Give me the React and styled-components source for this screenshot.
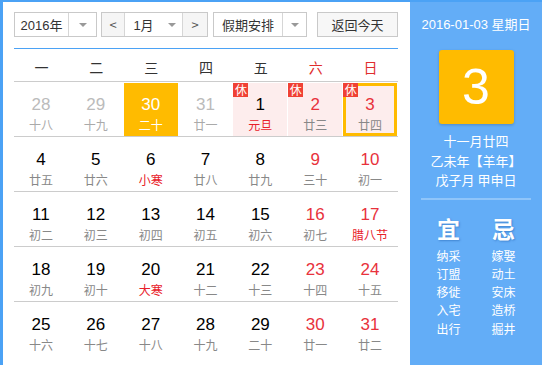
import React from 'react';
import styled, {createGlobalStyle} from 'styled-components';

const GlobalStyle = createGlobalStyle`
  html, body {
    margin: 0;
    padding: 0;
    background: #ffffff;
  }
  body {
    font-family: "Liberation Sans", "Noto Sans CJK SC", sans-serif;
  }
`;

const Widget = styled.div`
  display: flex;
  width: 542px;
  height: 365px;
  box-sizing: border-box;
  border-left: 3px solid #4ba2f5;
  border-top: 2px solid #4ba2f5;
  overflow: hidden;
  background: #ffffff;
`;

const Main = styled.div`
  width: 407px;
  box-sizing: border-box;
  padding: 10px 12px 0 11px;
  display: flex;
  flex-direction: column;
`;

const Toolbar = styled.div`
  display: flex;
  align-items: center;
  height: 25px;
`;

const Select = styled.div`
  display: flex;
  flex-shrink: 0;
  height: 25px;
  box-sizing: border-box;
  border: 1px solid #c9c9c9;
  background: #ffffff;
  margin-right: ${p => p.$gap || 0}px;
`;

const SelectText = styled.div`
  width: ${p => p.$w}px;
  display: flex;
  align-items: center;
  justify-content: center;
  font-size: 13px;
  color: #333333;
  font-family: "Liberation Sans", "Noto Sans CJK SC", sans-serif;
`;

const ArrowBox = styled.div`
  width: ${p => p.$w}px;
  display: flex;
  align-items: center;
  justify-content: center;
  border-left: ${p => (p.$divider ? '1px solid #d6d6d6' : 'none')};
`;

const Caret = styled.span`
  width: 0;
  height: 0;
  border-left: 4px solid transparent;
  border-right: 4px solid transparent;
  border-top: 4px solid #999999;
`;

const NavButton = styled.div`
  width: ${p => p.$w}px;
  display: flex;
  align-items: center;
  justify-content: center;
  background: #f5f5f5;
  color: #555555;
  font-size: 13px;
  font-family: "Noto Sans CJK SC", sans-serif;
  ${p => (p.$side === 'left' ? 'border-right: 1px solid #d6d6d6;' : 'border-left: 1px solid #d6d6d6;')}
`;

const TodayButton = styled.div`
  width: 81px;
  flex-shrink: 0;
  height: 25px;
  box-sizing: border-box;
  border: 1px solid #c9c9c9;
  background: #f7f7f7;
  display: flex;
  align-items: center;
  justify-content: center;
  font-size: 13px;
  color: #333333;
  font-family: "Noto Sans CJK SC", sans-serif;
`;

const WeekHeader = styled.div`
  margin-top: 11px;
  border-top: 1px solid #4ba2f5;
  border-bottom: 1px solid #cccccc;
  display: grid;
  grid-template-columns: repeat(7, 1fr);
  height: 34px;
  box-sizing: border-box;
`;

const WeekDay = styled.div`
  display: flex;
  align-items: center;
  justify-content: center;
  padding-top: 4px;
  font-size: 14px;
  color: ${p => (p.$weekend ? '#e02d2d' : '#333333')};
  font-family: "Noto Sans CJK SC", sans-serif;
`;

const Week = styled.div`
  display: grid;
  grid-template-columns: repeat(7, 1fr);
  height: 55px;
  box-sizing: border-box;
  border-bottom: ${p => (p.$last ? 'none' : '1px solid #cccccc')};
`;

const Cell = styled.div`
  position: relative;
  margin: 1px 1px 0 0;
  box-sizing: border-box;
  display: flex;
  flex-direction: column;
  align-items: center;
  padding-top: ${p => (p.$today ? 9 : 12)}px;
  background: ${p => (p.$hover ? '#ffbb00' : p.$rest ? '#fdeded' : 'transparent')};
  border: ${p => (p.$today ? '3px solid #ffbb00' : 'none')};
`;

const DayNum = styled.div`
  font-size: 17px;
  line-height: 20px;
  font-family: "Liberation Sans", Arial, sans-serif;
  color: ${p => p.$color};
`;

const Lunar = styled.div`
  margin-top: 2px;
  font-size: 12px;
  line-height: 16px;
  font-family: "Noto Sans CJK SC", sans-serif;
  color: ${p => p.$color};
`;

const RestBadge = styled.span`
  position: absolute;
  top: ${p => (p.$today ? -3 : 0)}px;
  left: ${p => (p.$today ? -3 : 0)}px;
  width: 15px;
  height: 14px;
  background: #f04134;
  color: #ffffff;
  font-size: 12px;
  line-height: 14px;
  text-align: center;
  font-family: "Noto Sans CJK SC", sans-serif;
`;

const Side = styled.div`
  flex: 1;
  background: #63adf7;
  display: flex;
  flex-direction: column;
  align-items: center;
  padding-top: 15px;
  color: #ffffff;
`;

const DateLine = styled.div`
  font-size: 13px;
  line-height: 16px;
  font-family: "Liberation Sans", "Noto Sans CJK SC", sans-serif;
`;

const BigDay = styled.div`
  margin-top: 17px;
  width: 75px;
  height: 74px;
  border-radius: 3px;
  background: #ffbb00;
  box-shadow: 0 1px 3px rgba(0, 0, 0, 0.2);
  display: flex;
  align-items: center;
  justify-content: center;
  font-size: 50px;
  font-family: "Liberation Sans", Arial, sans-serif;
`;

const LunarInfo = styled.div`
  margin-top: 7px;
  display: flex;
  flex-direction: column;
  align-items: center;
  font-size: 13px;
  line-height: 19.5px;
  font-family: "Noto Sans CJK SC", sans-serif;
`;

const Divider = styled.div`
  margin-top: 8px;
  width: 110px;
  height: 2px;
  background: #8fc5fa;
`;

const Almanac = styled.div`
  margin-top: 14px;
  display: grid;
  grid-template-columns: 40px 40px;
  column-gap: 15px;
  justify-items: center;
`;

const AlmanacCol = styled.div`
  display: flex;
  flex-direction: column;
  align-items: center;
`;

const AlmanacTitle = styled.div`
  font-size: 23px;
  line-height: 28px;
  font-weight: bold;
  text-shadow: 1px 1px 2px rgba(0, 60, 140, 0.35);
  margin-bottom: 5px;
  font-family: "Noto Sans CJK SC", sans-serif;
`;

const AlmanacItem = styled.div`
  font-size: 12px;
  line-height: 18.3px;
  font-family: "Noto Sans CJK SC", sans-serif;
`;

const WEEKDAYS = ['一', '二', '三', '四', '五', '六', '日'];

// [day, lunar, flags]  o = other month, f = festival, r = rest day, t = today, h = hover
const WEEKS = [
  [[28, '十八', 'o'], [29, '十九', 'o'], [30, '二十', 'oh'], [31, '廿一', 'o'], [1, '元旦', 'fr'], [2, '廿三', 'r'], [3, '廿四', 'rt']],
  [[4, '廿五'], [5, '廿六'], [6, '小寒', 'f'], [7, '廿八'], [8, '廿九'], [9, '三十'], [10, '初一']],
  [[11, '初二'], [12, '初三'], [13, '初四'], [14, '初五'], [15, '初六'], [16, '初七'], [17, '腊八节', 'f']],
  [[18, '初九'], [19, '初十'], [20, '大寒', 'f'], [21, '十二'], [22, '十三'], [23, '十四'], [24, '十五']],
  [[25, '十六'], [26, '十七'], [27, '十八'], [28, '十九'], [29, '二十'], [30, '廿一'], [31, '廿二']],
];

const GOOD = ['纳采', '订盟', '移徙', '入宅', '出行'];
const BAD = ['嫁娶', '动土', '安床', '造桥', '掘井'];

function DayCell({day, lunar, flags = '', col}) {
  const other = flags.includes('o');
  const hover = flags.includes('h');
  const weekend = col >= 5;
  let numColor = '#000000';
  if (other) numColor = '#bbbbbb';
  else if (weekend) numColor = '#e8323c';
  if (hover) numColor = '#ffffff';
  let lunarColor = other ? '#aaaaaa' : '#888888';
  if (flags.includes('f')) lunarColor = '#e8202a';
  if (hover) lunarColor = '#ffffff';

  return (
    <Cell $hover={hover} $rest={flags.includes('r')} $today={flags.includes('t')}>
      {flags.includes('r') && <RestBadge $today={flags.includes('t')}>休</RestBadge>}
      <DayNum $color={numColor}>{day}</DayNum>
      <Lunar $color={lunarColor}>{lunar}</Lunar>
    </Cell>
  );
}

export default function App() {
  return (
    <>
      <GlobalStyle/>
      <Widget>
        <Main>
          <Toolbar>
            <Select $gap={4}>
              <SelectText $w={53}>2016年</SelectText>
              <ArrowBox $w={27} $divider><Caret/></ArrowBox>
            </Select>
            <Select $gap={5}>
              <NavButton $w={22} $side="left">&lt;</NavButton>
              <SelectText $w={37}>1月</SelectText>
              <ArrowBox $w={20}><Caret/></ArrowBox>
              <NavButton $w={24} $side="right">&gt;</NavButton>
            </Select>
            <Select $gap={10}>
              <SelectText $w={68}>假期安排</SelectText>
              <ArrowBox $w={23} $divider><Caret/></ArrowBox>
            </Select>
            <TodayButton>返回今天</TodayButton>
          </Toolbar>

          <WeekHeader>
            {WEEKDAYS.map((d, i) => (
              <WeekDay key={d} $weekend={i >= 5}>{d}</WeekDay>
            ))}
          </WeekHeader>

          {WEEKS.map((week, wi) => (
            <Week key={wi} $last={wi === WEEKS.length - 1}>
              {week.map(([day, lunar, flags], col) => (
                <DayCell key={col} day={day} lunar={lunar} flags={flags} col={col}/>
              ))}
            </Week>
          ))}
        </Main>

        <Side>
          <DateLine>2016-01-03 星期日</DateLine>
          <BigDay>3</BigDay>
          <LunarInfo>
            <span>十一月廿四</span>
            <span>乙未年【羊年】</span>
            <span>戊子月 甲申日</span>
          </LunarInfo>
          <Divider/>
          <Almanac>
            <AlmanacCol>
              <AlmanacTitle>宜</AlmanacTitle>
              {GOOD.map(g => <AlmanacItem key={g}>{g}</AlmanacItem>)}
            </AlmanacCol>
            <AlmanacCol>
              <AlmanacTitle>忌</AlmanacTitle>
              {BAD.map(b => <AlmanacItem key={b}>{b}</AlmanacItem>)}
            </AlmanacCol>
          </Almanac>
        </Side>
      </Widget>
    </>
  );
}
